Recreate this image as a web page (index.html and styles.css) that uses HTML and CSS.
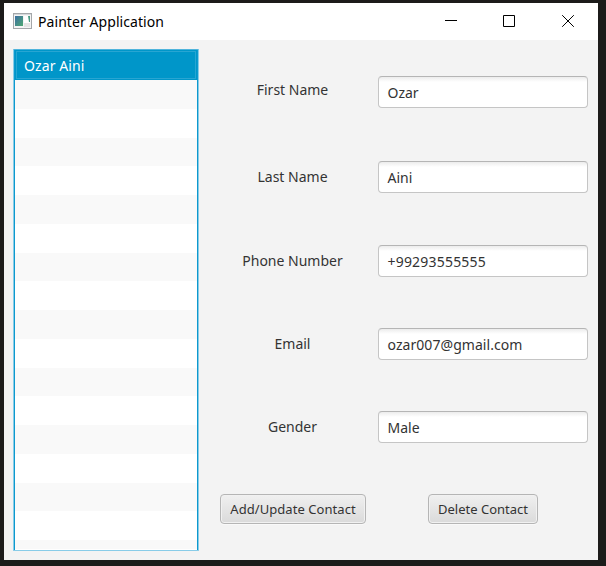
FILE: index.html
```
<!DOCTYPE html>
<html lang="en">
<head>
<meta charset="utf-8">
<title>Painter Application</title>
<link rel="stylesheet" href="styles.css">
</head>
<body>
<div class="window">
  <header class="titlebar">
    <svg class="app-icon" width="19" height="16" viewBox="0 0 19 16">
      <defs><linearGradient id="g" x1="0" y1="0" x2="1" y2="1"><stop offset="0" stop-color="#3b6ea2"/><stop offset="1" stop-color="#4fa873"/></linearGradient></defs>
      <rect x=".5" y=".5" width="18" height="15" fill="#f4f4f4" stroke="#a4a7aa"/>
      <rect x="1" y="1" width="17" height="1" fill="#d5d8db"/>
      <rect x="2" y="3" width="8" height="10" fill="url(#g)"/>
      <rect x="11" y="3" width="6" height="11" fill="#fff"/>
      <path d="M11 10h6v4h-6z" fill="#e4e4e4"/>
      <path d="M15 3h2v6h-1z" fill="#4b9a83"/>
    </svg>
    <h1 class="title"><span>Painter Application</span></h1>
    <svg class="controls" width="130" height="12" viewBox="0 0 130 12" fill="none" stroke="#000">
      <path d="M0 5.5h12M58.5.5h11v11h-11z"/>
      <path d="M117.2.2l11.6 11.6M128.8.2l-11.6 11.6"/>
    </svg>
  </header>
  <main class="content">
    <div class="list">
      <div class="item"><span>Ozar Aini</span></div>
      <div class="stripes"></div>
    </div>
    <form class="form">
      <div class="label raised"><span>First Name</span></div><div class="field"><span>Ozar</span></div>
      <div class="label"><span>Last Name</span></div><div class="field"><span>Aini</span></div>
      <div class="label"><span>Phone Number</span></div><div class="field phone"><span>+99293555555</span></div>
      <div class="label"><span>Email</span></div><div class="field mail"><span>ozar007@gmail.com</span></div>
      <div class="label"><span>Gender</span></div><div class="field"><span>Male</span></div>
      <div class="actions">
        <button class="button add" type="button"><span>Add/Update Contact</span></button>
        <button class="button delete" type="button"><span>Delete Contact</span></button>
      </div>
    </form>
  </main>
</div>
</body>
</html>
```
FILE: styles.css
```
* { box-sizing: border-box; }
body {
  margin: 0;
  height: 566px;
  padding: 3px 8px 6px 4px;
  overflow: hidden;
  background: #1c1b1a;
  font: 14px/20px "Noto Sans", "Open Sans", sans-serif;
  color: #333;
}
.window { height: 557px; background: #f3f3f3; }
.titlebar {
  display: flex;
  align-items: center;
  height: 37px;
  padding: 0 23px 0 9px;
  background: #fff;
}
.app-icon { margin-top: -1px; }
.title {
  flex: 1;
  margin: 0 0 0 6px;
  font-size: 14px;
  font-weight: 400;
  letter-spacing: .07px;
  color: #000;
}
.controls { margin-top: -1px; }
.content { display: flex; height: 520px; padding: 9px 10px 9px 9px; }
.list {
  width: 186px;
  height: 502px;
  padding: 0 1px 1px;
  border: 1px solid #88cce8;
  border-radius: 1px;
  border-top-color: #4fb4dc;
  background: #fff;
  box-shadow: inset 1px 0 #0d99ce, inset -1px 0 #0d99ce;
}
.item {
  height: 30px;
  padding: 6px 9px 4px;
  background: #0096c9;
  box-shadow: inset 0 0 0 1px #0096c9, inset 0 0 0 2px #28a5d2;
  color: #fff;
}
.item span { letter-spacing: .1px; }
.stripes {
  height: 469px;
  background: repeating-linear-gradient(#f9f9f9 0 28.75px, #fff 28.75px 57.5px);
}
.form {
  display: grid;
  grid-template-columns: 145px 210px;
  grid-template-rows: 85px 84px 83px 83px 83px 30px;
  column-gap: 13px;
  align-items: start;
  height: 448px;
  margin: 27px 0 0 21px;
}
.label { display: flex; align-items: center; justify-content: center; height: 32px; }
.raised { padding-bottom: 4px; }
.field {
  height: 32px;
  padding: 6px 8.5px;
  border: 1px solid #c5c5c5;
  border-top-color: #b5b5b5;
  border-radius: 4px;
  background: linear-gradient(#ececec, #fff 5px);
}
.phone { letter-spacing: .2px; }
.mail { letter-spacing: .06px; }
.actions { grid-column: 1 / 3; display: flex; gap: 62px; }
.button {
  height: 30px;
  padding: 0;
  border: 1px solid #b5b5b5;
  border-radius: 4px;
  background: linear-gradient(#f0f0f0, #dadada);
  box-shadow: inset 0 0 0 1px #f1f1f1, 0 1px #f9f9f9;
  font: 13px/20px "Noto Sans", "Open Sans", sans-serif;
  color: #333;
  white-space: nowrap;
}
.add { width: 146px; letter-spacing: .06px; }
.delete { width: 110px; }
```
